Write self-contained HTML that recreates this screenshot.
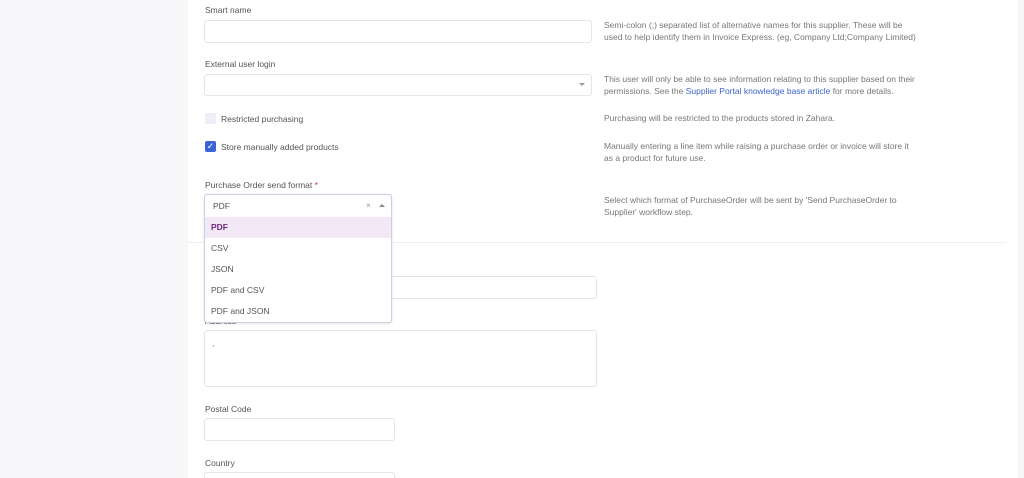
<!DOCTYPE html>
<html style="overflow:hidden;height:478px"><head><style>
*{box-sizing:border-box}
html,body{margin:0;width:1024px;height:478px;overflow:hidden}
body{background:#f7f7fa;font-family:"Liberation Sans",sans-serif;position:relative;color:#555}
.card{position:absolute;left:188px;top:0;width:830px;height:478px;background:#fff}
.a{position:absolute;font-size:8.5px;white-space:nowrap}
.lbl{color:#555}
.help{color:#777;line-height:11.5px}
.inp{position:absolute;border:1px solid #e6e6ea;border-radius:3px;background:#fff}
.opt{position:absolute;left:0;width:100%;height:21px;font-size:8.5px;line-height:21px;padding-left:6px;color:#555}
</style></head><body>
<div class="card"></div>
<div style="position:absolute;left:188px;top:242px;width:818px;height:1px;background:#f0f0f3"></div>
<div class="a lbl" style="left:205px;top:5px">Smart name</div>
<div class="inp" style="left:204px;top:20px;width:388px;height:23px"></div>
<div class="a help" style="left:604px;top:20px">Semi-colon (;) separated list of alternative names for this supplier. These will be<br>used to help identify them in Invoice Express. (eg, Company Ltd;Company Limited)</div>
<div class="a lbl" style="left:205px;top:59px">External user login</div>
<div class="inp" style="left:204px;top:74px;width:388px;height:22px"></div>
<div style="position:absolute;left:579px;top:83px;border-left:3px solid transparent;border-right:3px solid transparent;border-top:3px solid #999"></div>
<div class="a help" style="left:604px;top:74px">This user will only be able to see information relating to this supplier based on their<br>permissions. See the <span style="color:#3a63c9">Supplier Portal knowledge base article</span> for more details.</div>
<div style="position:absolute;left:205px;top:113px;width:11px;height:11px;border-radius:2px;background:#eceef8"></div>
<div class="a lbl" style="left:221px;top:114px">Restricted purchasing</div>
<div class="a help" style="left:604px;top:113px">Purchasing will be restricted to the products stored in Zahara.</div>
<div style="position:absolute;left:205px;top:141px;width:11px;height:11px;border-radius:2px;background:#3a63d8;color:#fff;font-size:9px;line-height:11px;text-align:center">✓</div>
<div class="a lbl" style="left:221px;top:142px">Store manually added products</div>
<div class="a help" style="left:604px;top:141px">Manually entering a line item while raising a purchase order or invoice will store it<br>as a product for future use.</div>
<div class="a lbl" style="left:205px;top:180px">Purchase Order send format <span style="color:#d33">*</span></div>
<div class="a help" style="left:604px;top:195px">Select which format of PurchaseOrder will be sent by 'Send PurchaseOrder to<br>Supplier' workflow step.</div>
<div class="a lbl" style="left:205px;top:404px">Postal Code</div>
<div class="inp" style="left:204px;top:418px;width:191px;height:23px"></div>
<div class="a lbl" style="left:205px;top:458px">Country</div>
<div class="inp" style="left:204px;top:472px;width:191px;height:23px"></div>
<div class="inp" style="left:204px;top:276px;width:393px;height:23px"></div>
<div class="a lbl" style="left:205px;top:316px">Address</div>
<div class="inp" style="left:204px;top:330px;width:393px;height:57px"></div>
<div class="a" style="left:212px;top:338px;color:#777">,</div>
<div style="position:absolute;left:204px;top:194px;width:188px;height:129px;background:#fff;border:1px solid #c9cfe6;border-radius:3px;box-shadow:0 1px 3px rgba(0,0,0,.1)">
<div class="a" style="left:8px;top:6px;color:#555">PDF</div>
<div class="a" style="left:161px;top:5px;color:#999">×</div>
<div style="position:absolute;left:174px;top:9px;border-left:3px solid transparent;border-right:3px solid transparent;border-bottom:3px solid #888"></div>
<div class="opt" style="top:22px;background:#f3e8f5;color:#6a2d7a;font-weight:bold">PDF</div>
<div class="opt" style="top:43px">CSV</div>
<div class="opt" style="top:64px">JSON</div>
<div class="opt" style="top:85px">PDF and CSV</div>
<div class="opt" style="top:106px">PDF and JSON</div>
</div>
</body></html>
